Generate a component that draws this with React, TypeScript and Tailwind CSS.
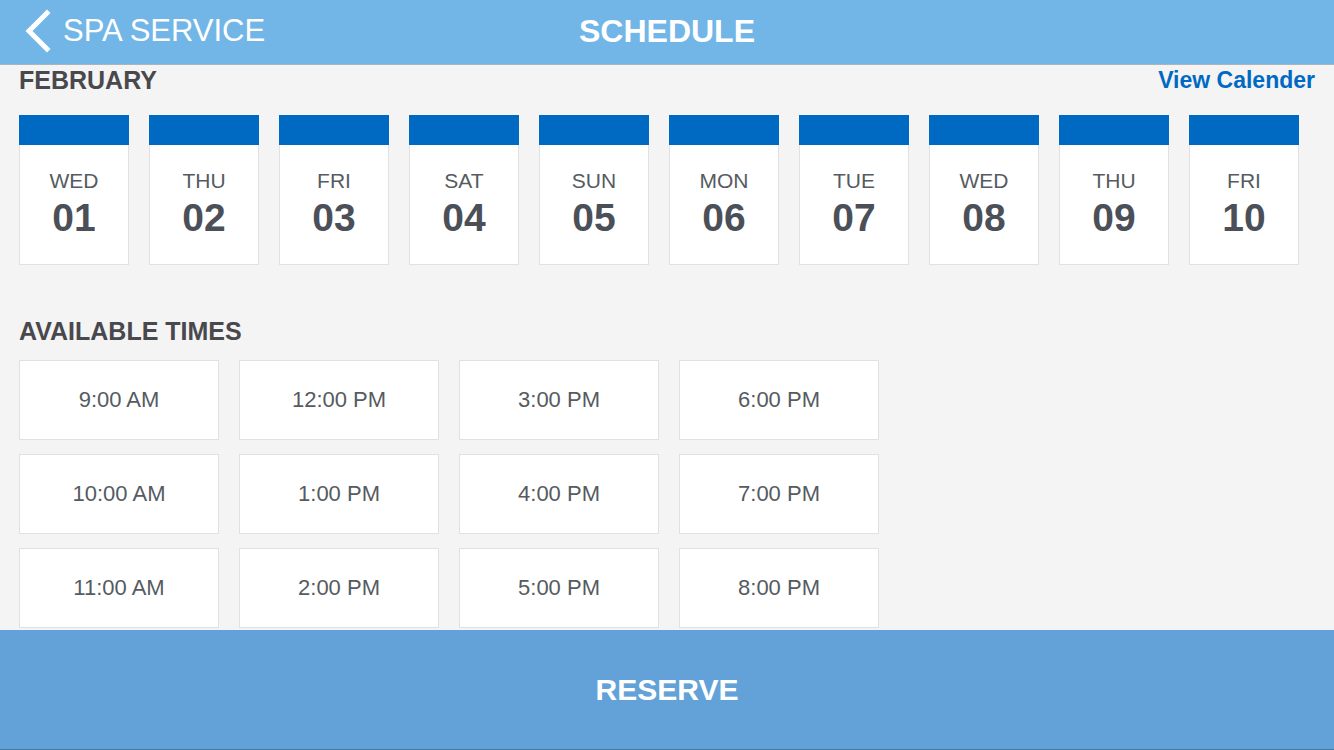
import React from 'react'

const days: Array<{ day: string; date: string }> = [
  { day: 'WED', date: '01' },
  { day: 'THU', date: '02' },
  { day: 'FRI', date: '03' },
  { day: 'SAT', date: '04' },
  { day: 'SUN', date: '05' },
  { day: 'MON', date: '06' },
  { day: 'TUE', date: '07' },
  { day: 'WED', date: '08' },
  { day: 'THU', date: '09' },
  { day: 'FRI', date: '10' },
]

const times: string[] = [
  '9:00 AM',
  '12:00 PM',
  '3:00 PM',
  '6:00 PM',
  '10:00 AM',
  '1:00 PM',
  '4:00 PM',
  '7:00 PM',
  '11:00 AM',
  '2:00 PM',
  '5:00 PM',
  '8:00 PM',
]

const App: React.FC = () => {
  return (
    <div className="flex h-screen flex-col bg-[#f4f4f4] font-['Liberation_Sans',Arial,sans-serif]">
      {/* top bar */}
      <header className="grid h-[65px] shrink-0 grid-cols-[1fr_auto_1fr] items-center border-b border-[#a9b4bd] bg-[#72b6e8] pb-[3px] text-white">
        <div className="flex items-center pl-[23px]">
          <svg width="30" height="44" viewBox="0 0 30 44" fill="none">
            <polyline
              points="24,4 6,22 24,40"
              stroke="white"
              strokeWidth="5"
              strokeLinecap="square"
            />
          </svg>
          <span className="ml-[10px] text-[31px] leading-none">SPA SERVICE</span>
        </div>
        <h1 className="text-[32px] font-bold leading-none">SCHEDULE</h1>
        <div />
      </header>

      <main className="flex-1 px-[19px]">
        <div className="flex h-[30px] items-center justify-between">
          <h2 className="text-[25px] font-bold leading-none text-[#48484d]">FEBRUARY</h2>
          <a className="pl-4 text-[23px] font-bold leading-none text-[#006ac3]">View Calender</a>
        </div>

        <div className="mt-[20px] flex gap-[20px]">
          {days.map((d, i) => (
            <div key={`${d.date}_${i}`} className="flex w-[110px] flex-col">
              <div className="h-[30px] bg-[#006ac3]" />
              <div className="flex h-[120px] flex-col items-center border-x border-b border-[#e1e1e1] bg-white pt-[25px]">
                <span className="text-[21px] leading-none text-[#555b61]">{d.day}</span>
                <span className="mt-[7px] text-[39px] font-bold leading-none text-[#4b5058]">{d.date}</span>
              </div>
            </div>
          ))}
        </div>

        <h2 className="mt-[51px] flex h-[30px] items-center text-[25px] font-bold leading-none text-[#48484d]">
          AVAILABLE TIMES
        </h2>

        <div className="mt-[14px] grid w-fit grid-cols-[repeat(4,200px)] gap-x-[20px] gap-y-[14px]">
          {times.map((t) => (
            <button
              key={t}
              className="flex h-[80px] items-center justify-center border border-[#e1e1e1] bg-white text-[22px] leading-none text-[#555b61]"
            >
              {t}
            </button>
          ))}
        </div>
      </main>

      <footer className="flex h-[120px] shrink-0 items-center justify-center border-b border-[#4a7ba3] bg-[#63a2d8]">
        <span className="text-[30px] font-bold leading-none text-white">RESERVE</span>
      </footer>
    </div>
  )
}

export default App
